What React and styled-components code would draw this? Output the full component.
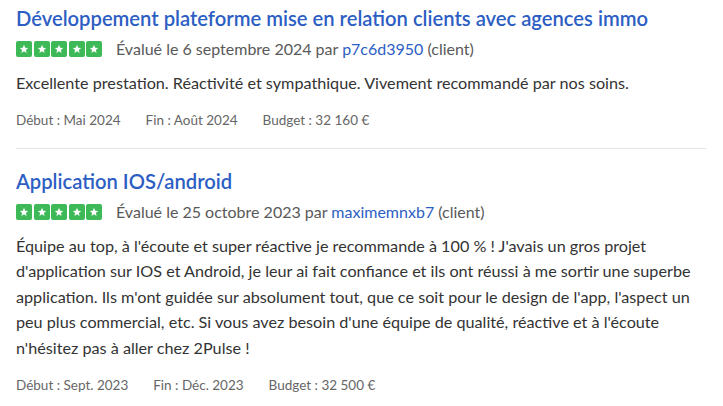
import React from "react";
import styled, { createGlobalStyle } from "styled-components";

const Global = createGlobalStyle`
  body {
    margin: 0;
    background: #fff;
    font-family: "Lato", "Noto Sans", sans-serif;
  }
`;

const List = styled.div`
  width: 690px;
  padding: 4px 0 0 16px;
`;

const Review = styled.article`
  padding-bottom: 18px;
  margin-bottom: 18px;
  border-bottom: 1px solid #e6e6e6;

  &:last-child {
    border-bottom: none;
    margin-bottom: 0;
    padding-bottom: 0;
  }
`;

const Title = styled.h2`
  margin: 0;
  font-size: 20.2px;
  line-height: 28px;
  font-weight: 600;
  color: #2c5ec4;
`;

const RatingRow = styled.div`
  display: flex;
  align-items: center;
  gap: 14px;
  margin-top: 6px;
  font-size: 16px;
  line-height: 22px;
  color: #595959;
`;

const Stars = styled.div`
  display: flex;
  gap: 1.5px;
`;

const StarBox = styled.span`
  width: 16px;
  height: 16px;
  border-radius: 2px;
  background: #3eb957;
  display: flex;
  align-items: center;
  justify-content: center;
`;

const Author = styled.a`
  color: #2c5ec4;
  text-decoration: none;
`;

const Body = styled.p`
  margin: 10px 0 0;
  font-size: 16.2px;
  line-height: 25.6px;
  color: #333;
`;

const Meta = styled.div`
  display: flex;
  gap: 25px;
  margin-top: 14px;
  font-size: 13.5px;
  line-height: 20px;
  color: #666;
`;

const Star = () => (
  <StarBox>
    <svg width="10" height="10" viewBox="0 0 24 24">
      <path
        fill="#fff"
        d="M12 2l2.9 6.9 7.1.6-5.4 4.7 1.6 7.1L12 17.6 5.8 21.3l1.6-7.1L2 9.5l7.1-.6z"
      />
    </svg>
  </StarBox>
);

const reviews = [
  {
    title: "Développement plateforme mise en relation clients avec agences immo",
    date: "6 septembre 2024",
    author: "p7c6d3950",
    text: "Excellente prestation. Réactivité et sympathique. Vivement recommandé par nos soins.",
    start: "Mai 2024",
    end: "Août 2024",
    budget: "32 160 €",
  },
  {
    title: "Application IOS/android",
    date: "25 octobre 2023",
    author: "maximemnxb7",
    text: "Équipe au top, à l'écoute et super réactive je recommande à 100 % ! J'avais un gros projet d'application sur IOS et Android, je leur ai fait confiance et ils ont réussi à me sortir une superbe application. Ils m'ont guidée sur absolument tout, que ce soit pour le design de l'app, l'aspect un peu plus commercial, etc. Si vous avez besoin d'une équipe de qualité, réactive et à l'écoute n'hésitez pas à aller chez 2Pulse !",
    start: "Sept. 2023",
    end: "Déc. 2023",
    budget: "32 500 €",
  },
];

export default function App() {
  return (
    <>
      <Global />
      <List>
        {reviews.map((r) => (
          <Review key={r.title}>
            <Title>{r.title}</Title>
            <RatingRow>
              <Stars>
                {[0, 1, 2, 3, 4].map((s) => (
                  <Star key={s} />
                ))}
              </Stars>
              <span>
                Évalué le {r.date} par <Author href="#">{r.author}</Author> (client)
              </span>
            </RatingRow>
            <Body>{r.text}</Body>
            <Meta>
              <span>Début : {r.start}</span>
              <span>Fin : {r.end}</span>
              <span>Budget : {r.budget}</span>
            </Meta>
          </Review>
        ))}
      </List>
    </>
  );
}
